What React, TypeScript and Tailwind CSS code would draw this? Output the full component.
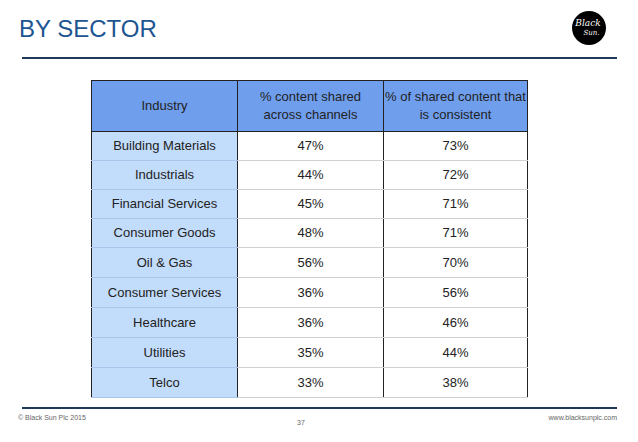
import React from 'react'

const rows: Array<[string, string, string]> = [
  ['Building Materials', '47%', '73%'],
  ['Industrials', '44%', '72%'],
  ['Financial Services', '45%', '71%'],
  ['Consumer Goods', '48%', '71%'],
  ['Oil & Gas', '56%', '70%'],
  ['Consumer Services', '36%', '56%'],
  ['Healthcare', '36%', '46%'],
  ['Utilities', '35%', '44%'],
  ['Telco', '33%', '38%'],
]

const Logo = () => (
  <div className="w-[34px] h-[34px] rounded-full bg-black flex flex-col items-center justify-center gap-[2px] text-white italic font-['DejaVu_Serif',serif]">
    <span className="text-[9px] leading-[9px] -ml-[2px]">Black</span>
    <span className="text-[7px] leading-[7px] ml-[5px]">Sun.</span>
  </div>
)

const App: React.FC = () => {
  return (
    <div className="w-[638px] h-[442px] bg-white relative flex flex-col font-['Liberation_Sans',Arial,sans-serif] text-[#222]">
      <div className="flex items-start justify-between pl-[19px] pr-[32px] h-[57px]">
        <h1 className="text-[24px] leading-none text-[#1c5591] mt-[17px]">BY SECTOR</h1>
        <div className="mt-[11px]">
          <Logo />
        </div>
      </div>
      <div className="mx-[22px] w-[595px] h-[2px] bg-[#1e3a5a]" />

      <div className="pl-[91px] mt-[21px]">
        <table className="border-collapse text-[13px] text-center w-[437px] border border-[#222]">
          <thead>
            <tr className="h-[51px] bg-[#6f9eed]">
              <th className="font-normal w-[146px] border border-[#222] leading-[18px]">Industry</th>
              <th className="font-normal w-[146px] border border-[#222] leading-[18px]">
                % content shared<br />across channels
              </th>
              <th className="font-normal border border-[#222] leading-[18px] whitespace-nowrap">
                % of shared content that<br />is consistent
              </th>
            </tr>
          </thead>
          <tbody>
            {rows.map(([name, a, b], i) => (
              <tr key={name} className={i < 4 ? 'h-[29px]' : 'h-[30px]'}>
                <td className="bg-[#c2dcfb] border-r border-r-[#222] border-b border-b-[#a9c6ea]">{name}</td>
                <td className="border-r border-r-[#222] border-b border-b-[#d0d0d0]">{a}</td>
                <td className="border-b border-b-[#d0d0d0]">{b}</td>
              </tr>
            ))}
          </tbody>
        </table>
      </div>

      <div className="mt-[9px] mx-[22px] w-[595px] h-[2px] bg-[#1e3a5a]" />
      <div className="flex items-start pl-[18px] pr-[21px] text-[7px] text-[#666] mt-[4px]">
        <span className="w-[279px]">© Black Sun Plc 2015</span>
        <span className="mt-[5px]">37</span>
        <span className="ml-auto">www.blacksunplc.com</span>
      </div>
    </div>
  )
}

export default App
